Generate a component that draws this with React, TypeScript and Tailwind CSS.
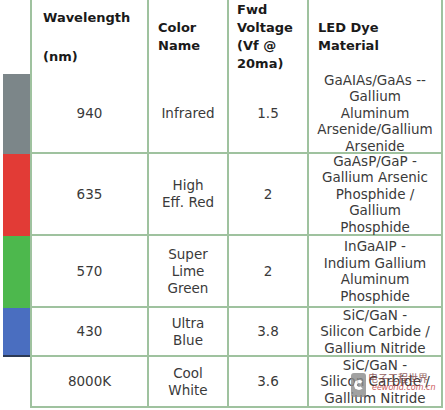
import React from "react";

const rows = [
  {
    strip: "bg-[#7c8689]",
    h: "h-[80px]",
    wave: "940",
    color: ["Infrared"],
    vf: "1.5",
    dye: ["GaAIAs/GaAs --", "Gallium", "Aluminum", "Arsenide/Gallium", "Arsenide"],
  },
  {
    strip: "bg-[#e23b36]",
    h: "h-[82px]",
    wave: "635",
    color: ["High", "Eff. Red"],
    vf: "2",
    dye: ["GaAsP/GaP -", "Gallium Arsenic", "Phosphide /", "Gallium", "Phosphide"],
  },
  {
    strip: "bg-[#4db84d]",
    h: "h-[72px]",
    wave: "570",
    color: ["Super", "Lime", "Green"],
    vf: "2",
    dye: ["InGaAIP -", "Indium Gallium", "Aluminum", "Phosphide"],
  },
  {
    strip: "bg-[#4a6ec0] border-b-2 border-[#2c3a55]",
    h: "h-[49px]",
    wave: "430",
    color: ["Ultra", "Blue"],
    vf: "3.8",
    dye: ["SiC/GaN -", "Silicon Carbide /", "Gallium Nitride"],
  },
  {
    strip: "",
    h: "h-[51px]",
    wave: "8000K",
    color: ["Cool", "White"],
    vf: "3.6",
    dye: ["SiC/GaN -", "Silicon Carbide /", "Gallium Nitride"],
  },
];

const cell = "flex flex-col items-center justify-center text-center border-l-2 border-b-2 border-[#9fc29f]";

const App = () => {
  return (
    <div
      className="relative w-[445px] h-[410px] bg-white pl-[3px] text-[#3a3a3a] text-[13.5px] leading-[16.5px]"
      style={{ fontFamily: '"DejaVu Sans", Verdana, sans-serif' }}
    >
      <div className="flex h-[74px] font-bold text-[13px] text-[#1a1a1a] leading-[18px]">
        <div className="w-[27px]" />
        <div className="w-[117px] border-l-2 border-[#9fc29f] pl-[11px] flex flex-col justify-center">
          <div>Wavelength</div>
          <div className="h-[21px]" />
          <div>(nm)</div>
        </div>
        <div className="w-[80px] border-l-2 border-[#9fc29f] pl-[9px] flex flex-col justify-center">
          <div>Color</div>
          <div>Name</div>
        </div>
        <div className="w-[80px] border-l-2 border-[#9fc29f] pl-[8px] flex flex-col justify-center">
          <div>Fwd</div>
          <div>Voltage</div>
          <div>(Vf @</div>
          <div>20ma)</div>
        </div>
        <div className="w-[136px] border-x-2 border-[#9fc29f] pl-[9px] flex flex-col justify-center">
          <div>LED Dye</div>
          <div>Material</div>
        </div>
      </div>
      {rows.map((r) => (
        <div key={r.wave} className={`flex ${r.h}`}>
          <div className={`w-[27px] ${r.strip}`} />
          <div className={`w-[117px] ${cell}`}>{r.wave}</div>
          <div className={`w-[80px] ${cell} leading-[17px]`}>
            {r.color.map((c) => (
              <div key={c}>{c}</div>
            ))}
          </div>
          <div className={`w-[80px] ${cell}`}>{r.vf}</div>
          <div className={`w-[136px] ${cell} border-r-2`}>
            {r.dye.map((d) => (
              <div key={d}>{d}</div>
            ))}
          </div>
        </div>
      ))}
      <div className="absolute left-[351px] top-[373px] flex items-start opacity-80">
        <div className="w-[15px] h-[24px] bg-[#8a8a8a] rounded-[3px] flex items-center justify-center">
          <div className="w-[10px] h-[10px] rounded-full border-[3px] border-white border-r-transparent" />
        </div>
        <div className="ml-[2px] flex flex-col leading-[10px]">
          <div
            className="text-[10px] text-[#7a3b3b]"
            style={{ fontFamily: '"Noto Sans CJK SC", sans-serif' }}
          >
            电子工程世界
          </div>
          <div className="text-[8px] italic text-[#c03030] ml-[4px]">eeworld.com.cn</div>
        </div>
      </div>
    </div>
  );
};

export default App;
